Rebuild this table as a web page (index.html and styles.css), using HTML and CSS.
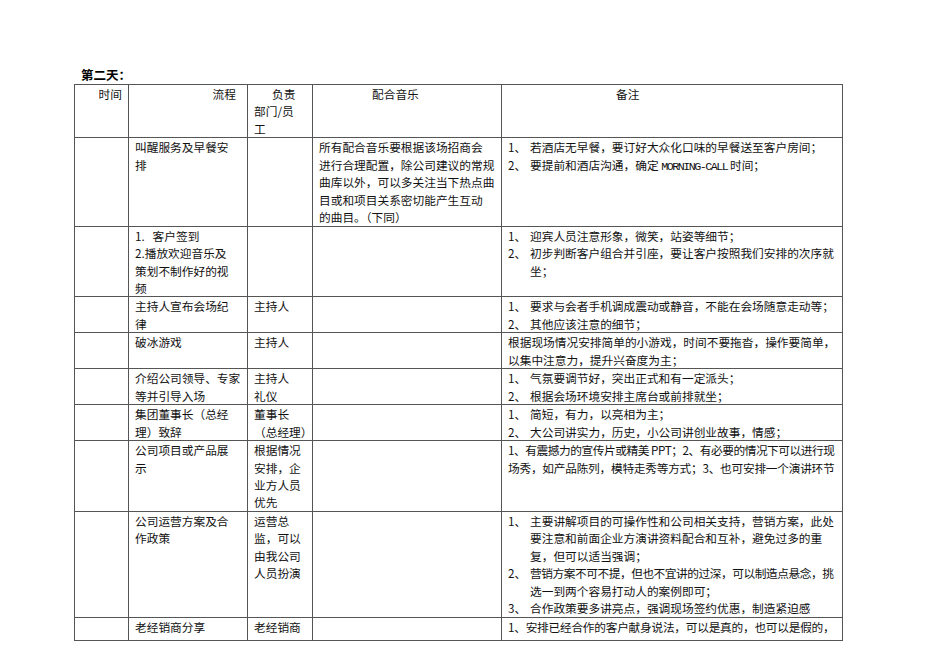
FILE: index.html
```html
<!DOCTYPE html>
<html lang="zh">
<head>
<meta charset="utf-8">
<title>第二天</title>
<link rel="stylesheet" href="styles.css">
</head>
<body>
<div class="page">
  <h2 class="day-title">第二天：</h2>
  <table class="plan">
    <colgroup>
      <col class="c-time"><col class="c-flow"><col class="c-owner"><col class="c-music"><col class="c-note">
    </colgroup>
    <thead>
      <tr>
        <th class="h-time">时间</th>
        <th class="h-flow">流程</th>
        <th class="h-owner"><span class="h-owner-top">负责</span><br>部门/员<br>工</th>
        <th class="h-music">配合音乐</th>
        <th class="h-note">备注</th>
      </tr>
    </thead>
    <tbody>
      <tr>
        <td></td>
        <td>叫醒服务及早餐安<br>排</td>
        <td></td>
        <td>所有配合音乐要根据该场招商会<br>进行合理配置，除公司建议的常规<br>曲库以外，可以多关注当下热点曲<br>目或和项目关系密切能产生互动<br>的曲目。（下同）</td>
        <td>
          <div class="item"><span class="num">1、</span><span class="txt">若酒店无早餐，要订好大众化口味的早餐送至客户房间；</span></div>
          <div class="item"><span class="num">2、</span><span class="txt">要提前和酒店沟通，确定 <span class="latin">MORNING-CALL</span> 时间；</span></div>
        </td>
      </tr>
      <tr>
        <td></td>
        <td>1.&nbsp;&nbsp; 客户签到<br>2.播放欢迎音乐及<br>策划不制作好的视<br>频</td>
        <td></td>
        <td></td>
        <td>
          <div class="item"><span class="num">1、</span><span class="txt">迎宾人员注意形象，微笑，站姿等细节；</span></div>
          <div class="item"><span class="num">2、</span><span class="txt">初步判断客户组合并引座，要让客户按照我们安排的次序就<br>坐；</span></div>
        </td>
      </tr>
      <tr>
        <td></td>
        <td>主持人宣布会场纪<br>律</td>
        <td>主持人</td>
        <td></td>
        <td>
          <div class="item"><span class="num">1、</span><span class="txt">要求与会者手机调成震动或静音，不能在会场随意走动等；</span></div>
          <div class="item"><span class="num">2、</span><span class="txt">其他应该注意的细节；</span></div>
        </td>
      </tr>
      <tr>
        <td></td>
        <td>破冰游戏</td>
        <td>主持人</td>
        <td></td>
        <td>根据现场情况安排简单的小游戏，时间不要拖沓，操作要简单，<br>以集中注意力，提升兴奋度为主；</td>
      </tr>
      <tr>
        <td></td>
        <td>介绍公司领导、专家<br>等并引导入场</td>
        <td>主持人<br>礼仪</td>
        <td></td>
        <td>
          <div class="item"><span class="num">1、</span><span class="txt">气氛要调节好，突出正式和有一定派头；</span></div>
          <div class="item"><span class="num">2、</span><span class="txt">根据会场环境安排主席台或前排就坐；</span></div>
        </td>
      </tr>
      <tr>
        <td></td>
        <td>集团董事长（总经<br>理）致辞</td>
        <td>董事长<br>（总经理）</td>
        <td></td>
        <td>
          <div class="item"><span class="num">1、</span><span class="txt">简短，有力，以亮相为主；</span></div>
          <div class="item"><span class="num">2、</span><span class="txt">大公司讲实力，历史，小公司讲创业故事，情感；</span></div>
        </td>
      </tr>
      <tr>
        <td></td>
        <td>公司项目或产品展<br>示</td>
        <td>根据情况<br>安排，企<br>业方人员<br>优先</td>
        <td></td>
        <td><span class="tight">1、有震撼力的宣传片或精美 PPT；2、有必要的情况下可以进行现</span><br><span class="tight-s">场秀，如产品陈列，模特走秀等方式；3、也可安排一个演讲环节</span></td>
      </tr>
      <tr>
        <td></td>
        <td>公司运营方案及合<br>作政策</td>
        <td>运营总<br>监，可以<br>由我公司<br>人员扮演</td>
        <td></td>
        <td>
          <div class="item"><span class="num">1、</span><span class="txt">主要讲解项目的可操作性和公司相关支持，营销方案，此处<br>要注意和前面企业方演讲资料配合和互补，避免过多的重<br>复，但可以适当强调；</span></div>
          <div class="item"><span class="num">2、</span><span class="txt"><span class="tight">营销方案不可不提，但也不宜讲的过深，可以制造点悬念，挑</span><br>选一到两个容易打动人的案例即可；</span></div>
          <div class="item"><span class="num">3、</span><span class="txt">合作政策要多讲亮点，强调现场签约优惠，制造紧迫感</span></div>
        </td>
      </tr>
      <tr class="row-last">
        <td></td>
        <td>老经销商分享</td>
        <td>老经销商</td>
        <td></td>
        <td><span class="tight-s">1、安排已经合作的客户献身说法，可以是真的，也可以是假的，</span></td>
      </tr>
    </tbody>
  </table>
</div>
</body>
</html>
```

FILE: styles.css
```css
html, body {
  margin: 0;
  padding: 0;
  background: #ffffff;
}

.page {
  padding: 66px 0 0 74px;
  font-family: "Noto Sans CJK SC", "Noto Sans", sans-serif;
  color: #111;
}

.day-title {
  margin: 0 0 0 7px;
  font-size: 12.5px;
  line-height: 18px;
  font-weight: bold;
  color: #000;
}

.plan {
  border-collapse: collapse;
  table-layout: fixed;
  width: 768px;
  font-size: 11.7px;
  line-height: 17.45px;
}

.c-time { width: 54px; }
.c-flow { width: 119px; }
.c-owner { width: 65px; }
.c-music { width: 189px; }
.c-note { width: 341px; }

.plan th,
.plan td {
  border: 1px solid #555;
  padding: 0 3px 0 6px;
  vertical-align: top;
  text-align: left;
  font-weight: normal;
  white-space: nowrap;
  overflow: hidden;
}

.h-time { text-align: right !important; padding-right: 6px !important; }
.h-flow { text-align: right !important; padding-right: 11px !important; }
.h-owner-top { padding-left: 18px; }
.h-music { padding-left: 59px !important; }
.h-note { padding-left: 114px !important; }

.item {
  display: flex;
}

.num {
  flex: 0 0 22px;
}

.txt {
  flex: 1;
}

.latin {
  font-family: "Liberation Mono", monospace;
  letter-spacing: -1.5px;
}

.tight {
  letter-spacing: -0.45px;
}

.tight-s {
  letter-spacing: -0.25px;
}

.row-last td {
  height: 22px;
}
```
